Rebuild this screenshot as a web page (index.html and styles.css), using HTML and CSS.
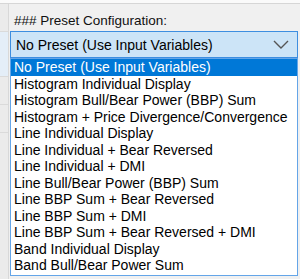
FILE: index.html
```html
<!DOCTYPE html>
<html>
    <head>
    <title>preset configuration</title>
    <link rel="stylesheet" href="styles.css">
    </head>
    <body>
        <div class="page">
            <div class="topStrip"></div>
            <div class="gridRow">
                <div class="gutter">
                    <div class="gutterCell"></div>
                    <div class="gutterCell selected"></div>
                    <div class="gutterCell"></div>
                    <div class="gutterCell"></div>
                </div>
                <div class="panel">
                    <div class="label">### Preset Configuration:</div>
                    <div class="combo">
                        <span class="comboText">No Preset (Use Input Variables)</span>
                        <svg class="chevron" width="16" height="10" viewBox="0 0 16 10">
                            <path d="M1 1 L8 8 L15 1" fill="none" stroke="#555" stroke-width="1.4"/>
                        </svg>
                    </div>
                    <div class="dropList">
                        <div class="item active">No Preset (Use Input Variables)</div>
                        <div class="item">Histogram Individual Display</div>
                        <div class="item">Histogram Bull/Bear Power (BBP) Sum</div>
                        <div class="item">Histogram + Price Divergence/Convergence</div>
                        <div class="item">Line Individual Display</div>
                        <div class="item">Line Individual + Bear Reversed</div>
                        <div class="item">Line Individual + DMI</div>
                        <div class="item">Line Bull/Bear Power (BBP) Sum</div>
                        <div class="item">Line BBP Sum + Bear Reversed</div>
                        <div class="item">Line BBP Sum + DMI</div>
                        <div class="item">Line BBP Sum + Bear Reversed + DMI</div>
                        <div class="item">Band Individual Display</div>
                        <div class="item">Band Bull/Bear Power Sum</div>
                    </div>
                </div>
            </div>
        </div>
    </body>
</html>
```

FILE: styles.css
```css
body{
    margin: 0;
    background-color: #f0f0f0;
    font-family: "Liberation Sans", Arial, sans-serif;
}
.page{
    width: 300px;
    height: 279px;
    overflow: hidden;
}
.topStrip{
    height: 3px;
    background-color: #fafafa;
    border-bottom: 1px solid #d6d6d6;
}
.gridRow{
    display: flex;
}
.gutter{
    width: 8px;
    border-right: 1px solid #d8d8d8;
    background-color: #ebebeb;
    height: 275px;
}
.gutterCell{
    height: 27px;
    border-bottom: 1px solid #dadada;
}
.gutterCell.selected{
    height: 44px;
    background-color: #e4eef8;
}
.panel{
    flex: 1;
    padding-left: 1px;
    padding-right: 2px;
}
.label{
    font-size: 13.5px;
    color: #111;
    padding: 9px 0 0 4px;
    height: 18px;
}
.combo{
    height: 25px;
    border: 1px solid #3d8ee0;
    background-color: #cce4f7;
    display: flex;
    align-items: center;
    justify-content: space-between;
    padding: 0 6px 0 5px;
}
.comboText{
    font-size: 14px;
    color: #000;
}
.chevron{
    margin-right: 2px;
}
.dropList{
    border: 1px solid #64a5e8;
    background-color: #fff;
    padding-bottom: 1px;
}
.item{
    font-size: 14px;
    line-height: 16.5px;
    height: 16.5px;
    padding-left: 3px;
    color: #000;
    white-space: nowrap;
}
.item.active{
    background-color: #0078d7;
    color: #fff;
}
```
